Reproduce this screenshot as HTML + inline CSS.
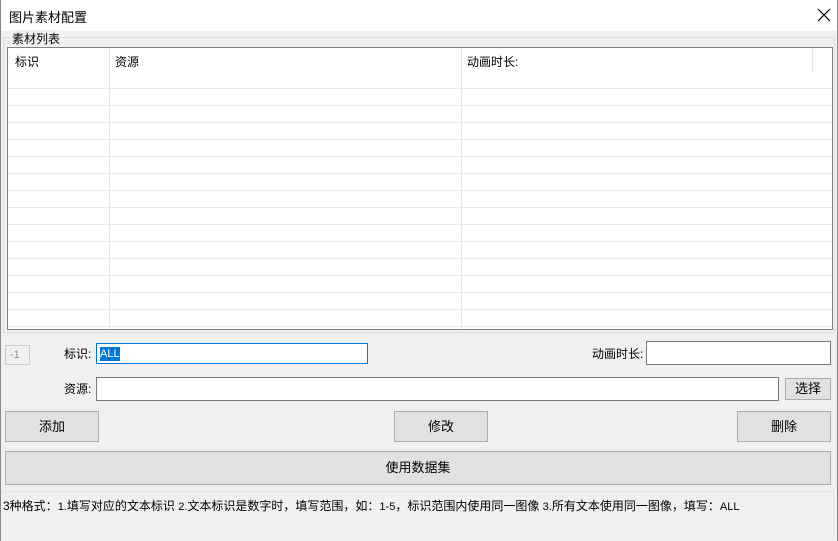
<!DOCTYPE html>
<html><head><meta charset="utf-8"><style>
*{margin:0;padding:0;box-sizing:border-box}
body{width:838px;height:541px;background:#f0f0f0;font-family:"Liberation Sans","Microsoft YaHei","Noto Sans CJK SC",sans-serif;font-size:12px;color:#000;position:relative;overflow:hidden}
.a{position:absolute}
.btn{position:absolute;background:#e1e1e1;border:1px solid #adadad;text-align:center}
.inp{position:absolute;background:#fff;border:1px solid #7a7a7a}
</style></head><body>
<div class="a" style="left:0;top:0;width:838px;height:31px;background:#fff"></div>
<div class="a" style="left:9px;top:7px;font-size:13px">图片素材配置</div>
<svg class="a" style="left:817px;top:8px" width="14" height="14"><path d="M1 1L13 13M13 1L1 13" stroke="#000" stroke-width="1.2"/></svg>
<div class="a" style="left:0;top:0;width:1px;height:541px;background:#888"></div>
<div class="a" style="right:0;top:0;width:1px;height:541px;background:#888"></div>
<div class="a" style="left:3px;top:37px;width:832px;height:296px;border:1px solid #dcdcdc"></div>
<div class="a" style="left:10px;top:30px;background:#f0f0f0;padding:0 2px;font-size:12px">素材列表</div>
<div class="a" style="left:7px;top:47px;width:826px;height:283px;background:#fff;border:1px solid #828282;overflow:hidden">
<div class="a" style="left:0;top:24px;width:100%;height:280px;background:repeating-linear-gradient(to bottom,transparent 0 16px,#eaeaea 16px 17px)"></div>
<div class="a" style="left:0;top:0;width:100%;height:24px;background:#fff"></div>
<div class="a" style="left:101px;top:0;width:1px;height:100%;background:#e6e6e6"></div>
<div class="a" style="left:453px;top:0;width:1px;height:100%;background:#e6e6e6"></div>
<div class="a" style="left:804px;top:0;width:1px;height:24px;background:#e6e6e6"></div>
<div class="a" style="left:7px;top:5px">标识</div>
<div class="a" style="left:107px;top:5px">资源</div>
<div class="a" style="left:459px;top:5px">动画时长:</div>
</div>
<div class="a" style="left:5px;top:345px;width:25px;height:20px;border:1px solid #ccc;color:#888;font-size:11px;padding:3px 0 0 4px">-1</div>
<div class="a" style="left:64px;top:345px">标识:</div>
<div class="inp" style="left:96px;top:343px;width:272px;height:21px;border-color:#0078d7"><span style="background:#0078d7;color:#fff;font-size:11px;margin:3px 0 0 3px;display:inline-block;line-height:14px">ALL</span></div>
<div class="a" style="left:592px;top:345px">动画时长:</div>
<div class="inp" style="left:646px;top:341px;width:185px;height:24px"></div>
<div class="a" style="left:64px;top:380px">资源:</div>
<div class="inp" style="left:96px;top:377px;width:683px;height:24px"></div>
<div class="btn" style="left:785px;top:378px;width:46px;height:22px;line-height:20px;font-size:13px">选择</div>
<div class="btn" style="left:5px;top:411px;width:94px;height:31px;line-height:29px;font-size:13px">添加</div>
<div class="btn" style="left:394px;top:411px;width:94px;height:31px;line-height:29px;font-size:13px">修改</div>
<div class="btn" style="left:737px;top:411px;width:94px;height:31px;line-height:29px;font-size:13px">删除</div>
<div class="btn" style="left:5px;top:451px;width:826px;height:34px;line-height:32px;font-size:13px">使用数据集</div>
<div class="a" style="left:2px;top:491px;width:832px;height:46px;border-top:1px solid #e4e4e4;border-right:1px solid #e4e4e4"></div>
<div class="a" style="left:3px;top:497px;font-size:12px;white-space:nowrap">3种格式：<span style="font-size:11px">1.</span>填写对应的文本标识 <span style="font-size:11px">2.</span>文本标识是数字时，填写范围，如：<span style="font-size:11px">1-5</span>，标识范围内使用同一图像 <span style="font-size:11px">3.</span>所有文本使用同一图像，填写：<span style="font-size:11px">ALL</span></div>
</body></html>
